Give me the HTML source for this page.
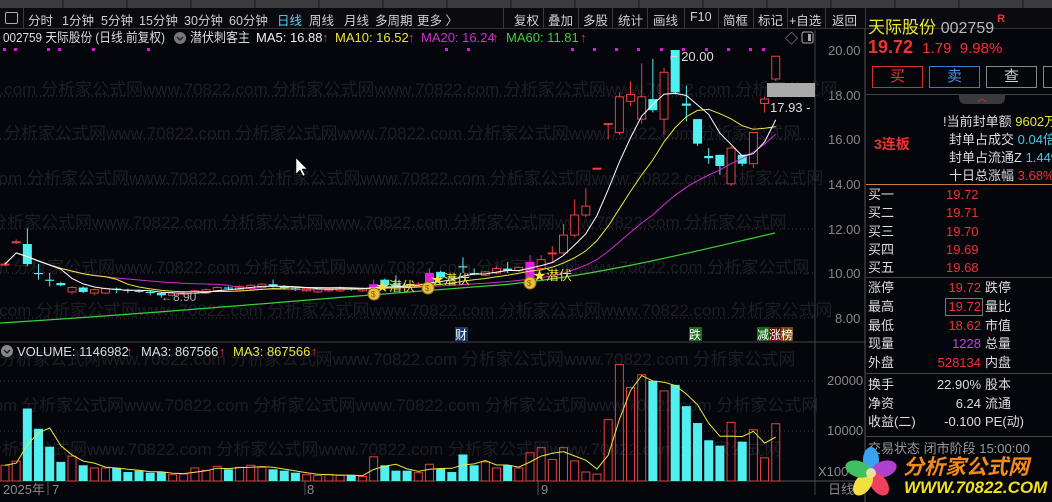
<!DOCTYPE html>
<html><head><meta charset="utf-8">
<style>
*{margin:0;padding:0;box-sizing:border-box}
body{width:1052px;height:502px;overflow:hidden;background:#05050c;font-family:"Liberation Sans","Noto Sans CJK SC",sans-serif;position:relative;color:#ccc}
.a{position:absolute;white-space:nowrap}
#top{left:0;top:0;width:1052px;height:8px;background:#3c3c3e;background-image:repeating-linear-gradient(90deg,transparent 0 62px,#2a2a2c 62px 64px)}
#tb{left:0;top:8px;width:1052px;height:21px;background:#0a0a10;border-bottom:1px solid #333}
#tb span{position:absolute;top:2px;font-size:12.5px;color:#d0d0d0}
.sep{position:absolute;top:0;width:1px;height:21px;background:#3a3a3a}
.rp{font-size:13px}
.btn{position:absolute;top:66px;height:22px;width:51px;border:1px solid;text-align:center;font-size:15px;line-height:20px}
</style></head><body>
<div id="top" class="a"></div>
<div id="tb" class="a">
<div style="position:absolute;left:5px;top:4px;width:13px;height:12px;border:1px solid #aaa;border-radius:2px"></div>
<div class="sep" style="left:23px"></div>
<span style="left:28px">分时</span><span style="left:62px">1分钟</span><span style="left:101px">5分钟</span><span style="left:139px">15分钟</span><span style="left:184px">30分钟</span><span style="left:229px">60分钟</span><span style="left:277px;color:#4fd9ee">日线</span><span style="left:309px">周线</span><span style="left:344px">月线</span><span style="left:375px">多周期</span><span style="left:417px">更多 〉</span>
<div class="sep" style="left:503px"></div>
<span style="left:514px">复权</span><div class="sep" style="left:543px"></div>
<span style="left:548px">叠加</span><div class="sep" style="left:578px"></div>
<span style="left:583px">多股</span><div class="sep" style="left:612px"></div>
<span style="left:618px">统计</span><div class="sep" style="left:647px"></div>
<span style="left:653px">画线</span><div class="sep" style="left:684px"></div>
<span style="left:690px">F10</span><div class="sep" style="left:718px"></div>
<span style="left:723px">简框</span><div class="sep" style="left:753px"></div>
<span style="left:758px">标记</span><div class="sep" style="left:787px"></div>
<span style="left:789px">+自选</span><div class="sep" style="left:825px"></div>
<span style="left:832px">返回</span><div class="sep" style="left:865px"></div>
</div>

<svg class="a" style="left:0;top:0" width="866" height="502" id="ch">
<g stroke="#3a3a44" stroke-dasharray="1 3">
<line x1="0" y1="96" x2="815" y2="96"/><line x1="0" y1="139" x2="815" y2="139"/><line x1="0" y1="184" x2="815" y2="184"/><line x1="0" y1="229" x2="815" y2="229"/><line x1="0" y1="273" x2="815" y2="273"/><line x1="0" y1="318" x2="815" y2="318"/><line x1="0" y1="381" x2="815" y2="381"/><line x1="0" y1="431" x2="815" y2="431"/>
</g>
<line x1="815" y1="30" x2="815" y2="495" stroke="#444"/>
<line x1="0" y1="342" x2="866" y2="342" stroke="#444"/>
<line x1="0" y1="481" x2="866" y2="481" stroke="#555"/>
<line x1="865" y1="29" x2="865" y2="502" stroke="#555"/>
<g fill="#888" font-size="13" font-family="Liberation Sans">
<text x="828" y="55">20.00</text><text x="828" y="100">18.00</text><text x="828" y="144">16.00</text><text x="828" y="189">14.00</text><text x="828" y="234">12.00</text><text x="828" y="278">10.00</text><text x="835" y="323">8.00</text>
<text x="827" y="385">20000</text><text x="827" y="435">10000</text><text x="818" y="476">X100</text>
<text x="828" y="494">日线</text>
<text x="3" y="494">2025年</text><text x="52" y="494">7</text><text x="307" y="494">8</text><text x="541" y="494">9</text>
</g>
<g stroke="#555"><line x1="48" y1="481" x2="48" y2="495"/><line x1="305" y1="481" x2="305" y2="495"/><line x1="538" y1="481" x2="538" y2="495"/></g>
<g id="wm" font-size="17" fill="#1e1e26" font-family="Liberation Sans,Noto Sans CJK SC"></g>
<g id="cd"></g>
<path d="M0 323 C150 314 300 300 500 285 C600 276 700 250 775 233" stroke="#3ad23a" stroke-width="1.2" fill="none"/>
<g fill="#d020d0"><rect x="3" y="48" width="3" height="3"/><rect x="14" y="48" width="3" height="3"/><rect x="47" y="48" width="3" height="3"/><rect x="58" y="48" width="3" height="3"/><rect x="92" y="48" width="3" height="3"/><rect x="147" y="48" width="3" height="3"/>
<rect x="445" y="48" width="3" height="3"/><rect x="467" y="48" width="3" height="3"/><rect x="571" y="48" width="3" height="3"/><rect x="593" y="48" width="3" height="3"/><rect x="615" y="48" width="3" height="3"/><rect x="637" y="48" width="3" height="3"/><rect x="660" y="48" width="3" height="3"/><rect x="682" y="48" width="3" height="3"/><rect x="705" y="48" width="3" height="3"/><rect x="727" y="48" width="3" height="3"/><rect x="749" y="48" width="3" height="3"/><rect x="762" y="48" width="3" height="3"/></g>
<text x="3" y="42" font-size="13" fill="#ddd" textLength="162" lengthAdjust="spacingAndGlyphs">002759 天际股份 (日线.前复权)</text>
<circle cx="180" cy="38" r="6" fill="#777"/><path d="M177 37 l3 3 l3 -3" stroke="#222" stroke-width="1.5" fill="none"/>
<text x="190" y="42" font-size="13" fill="#ddd" textLength="60" lengthAdjust="spacingAndGlyphs">潜伏刺客主</text>
<text x="256" y="42" font-size="13" fill="#eee">MA5: 16.88</text><text x="322" y="42" font-size="13" fill="#e33">↑</text>
<text x="335" y="42" font-size="13" fill="#e8e830">MA10: 16.52</text><text x="408" y="42" font-size="13" fill="#e33">↑</text>
<text x="421" y="42" font-size="13" fill="#d030d0">MA20: 16.24</text><text x="492" y="42" font-size="13" fill="#e33">↑</text>
<text x="506" y="42" font-size="13" fill="#3ad23a">MA60: 11.81</text><text x="580" y="42" font-size="13" fill="#e33">↑</text>
<text x="785" y="43" font-size="13" fill="#aaa">◇</text><rect x="802" y="32" width="11" height="11" rx="2" fill="none" stroke="#aaa"/><rect x="808" y="34" width="3" height="7" fill="#aaa"/>
<text x="670" y="61" font-size="13" fill="#ddd">⌐ 20.00</text>
<rect x="767" y="83" width="48" height="14" fill="#aaa"/>
<text x="770" y="112" font-size="13" fill="#ddd">17.93 -</text>
<text x="161" y="301" font-size="12" fill="#aaa">←8.90</text>
<rect x="455" y="327" width="13" height="14" fill="#123a6a"/><text x="455" y="339" font-size="12" fill="#fff">财</text>
<rect x="689" y="327" width="13" height="14" fill="#186a18"/><text x="689" y="339" font-size="12" fill="#fff">跌</text>
<rect x="757" y="327" width="12" height="14" fill="#186a18"/><rect x="769" y="327" width="12" height="14" fill="#6a1010"/><rect x="781" y="327" width="12" height="14" fill="#7a4a10"/><text x="757" y="339" font-size="12" fill="#fff">减涨榜</text>
<g font-size="13" fill="#f0e040"><text x="376" y="291">★潜伏</text><text x="431" y="284">★潜伏</text><text x="533" y="280">★潜伏</text></g>
<g fill="#e8c040" stroke="#a07010"><circle cx="374" cy="294" r="6"/><circle cx="428" cy="288" r="6"/><circle cx="530" cy="283" r="6"/></g>
<g font-size="8" fill="#8a5a00"><text x="371" y="297">$</text><text x="425" y="291">$</text><text x="527" y="286">$</text></g>
<circle cx="7" cy="351" r="6" fill="#888"/><path d="M4 350 l3 3 l3 -3" stroke="#222" stroke-width="1.5" fill="none"/>
<text x="17" y="356" font-size="13" fill="#ddd">VOLUME: 1146982</text><text x="126" y="356" font-size="13" fill="#e33">↑</text>
<text x="141" y="356" font-size="13" fill="#ddd">MA3: 867566</text><text x="219" y="356" font-size="13" fill="#e33">↑</text>
<text x="233" y="356" font-size="13" fill="#e8e830">MA3: 867566</text><text x="311" y="356" font-size="13" fill="#e33">↑</text>
<path d="M296 158 l0 16 l4 -4 l3 6 l2 -1 l-3 -6 l5 0 z" fill="#fff" stroke="#000" stroke-width=".5"/>
</svg>

<div class="a" style="left:868px;top:13px;font-size:17px;color:#e8e830">天际股份 <span style="color:#bbb;font-size:16px">002759</span><span style="color:#e33;font-size:11px;font-weight:bold;vertical-align:top"> R</span></div>
<div class="a" style="left:868px;top:37px;font-size:18px;color:#ee3333"><b>19.72</b> <span style="font-size:15px">&nbsp;1.79 &nbsp;9.98%</span></div>
<div class="btn" style="left:872px;border-color:#d03030;color:#e33">买</div>
<div class="btn" style="left:929px;border-color:#3a7ad0;color:#4a90e0">卖</div>
<div class="btn" style="left:986px;border-color:#888;color:#ccc">查</div>
<div class="btn" style="left:1043px;border-color:#888;width:20px"></div>
<div class="a" style="left:866px;top:94px;width:186px;border-top:1px solid #444"></div>
<div class="a" style="left:959px;top:94px;width:46px;height:10px;background:#3a3a3e;border-radius:0 0 6px 6px;color:#e33;font-size:9px;text-align:center;line-height:9px">︿</div>
<div class="a rp" style="left:943px;top:111px;color:#ddd">ǃ当前封单额 <span style="color:#e8e830">9602万</span></div>
<div class="a rp" style="left:949px;top:129px;color:#ddd">封单占成交 <span style="color:#3ad0e0">0.04倍</span></div>
<div class="a rp" style="left:949px;top:147px;color:#ddd">封单占流通Z <span style="color:#3ad0e0">1.44%</span></div>
<div class="a rp" style="left:949px;top:165px;color:#ddd">十日总涨幅 <span style="color:#e33">3.68%</span></div>
<div class="a" style="left:874px;top:134px;font-size:14px;font-weight:bold;color:#ee3333">3连板</div>
<div class="a" style="left:866px;top:184px;width:186px;border-top:1px solid #c08040"></div>
<div class="a rp" style="left:868px;top:186px;line-height:18.3px;color:#ddd">买一<br>买二<br>买三<br>买四<br>买五</div>
<div class="a rp" style="left:946px;top:186px;line-height:18.3px;color:#ee3333">19.72<br>19.71<br>19.70<br>19.69<br>19.68</div>
<div class="a" style="left:866px;top:277px;width:186px;border-top:1px solid #444"></div>
<div class="a rp" style="left:868px;top:279px;line-height:18.8px;color:#ddd">涨停<br>最高<br>最低<br>现量<br>外盘</div>
<div class="a rp" style="left:908px;top:279px;width:73px;text-align:right;line-height:18.8px;color:#ee3333">19.72<br>19.72<br>18.62<br><span style="color:#c040e0">1228</span><br>528134</div>
<div class="a" style="left:945px;top:298px;width:38px;height:18px;border:1px solid #777"></div>
<div class="a rp" style="left:985px;top:279px;line-height:18.8px;color:#ddd">跌停<br>量比<br>市值<br>总量<br>内盘</div>
<div class="a" style="left:866px;top:373px;width:186px;border-top:1px solid #444"></div>
<div class="a rp" style="left:868px;top:376px;line-height:18.5px;color:#ddd">换手<br>净资<br>收益(二)</div>
<div class="a rp" style="left:908px;top:376px;width:73px;text-align:right;line-height:18.5px;color:#ddd">22.90%<br>6.24<br>-0.100</div>
<div class="a rp" style="left:985px;top:376px;line-height:18.5px;color:#ddd">股本<br>流通<br>PE(动)</div>
<div class="a" style="left:866px;top:436px;width:186px;border-top:1px solid #444"></div>
<div class="a rp" style="left:868px;top:438px;color:#999">交易状态 闭市阶段 15:00:00</div>
<svg class="a" style="left:843px;top:445px" width="60" height="56">
<g transform="translate(28,28)">
<ellipse cx="0" cy="-13" rx="8" ry="13" fill="#3aa0f0"/>
<ellipse cx="13" cy="-4" rx="8" ry="13" fill="#b040d0" transform="rotate(72 13 -4)"/>
<ellipse cx="8" cy="11" rx="8" ry="13" fill="#f04060" transform="rotate(144 8 11)"/>
<ellipse cx="-8" cy="11" rx="8" ry="13" fill="#f0e040" transform="rotate(216 -8 11)"/>
<ellipse cx="-13" cy="-4" rx="8" ry="13" fill="#40c060" transform="rotate(288 -13 -4)"/>
<circle r="5" fill="#e8e0a0"/></g></svg>
<div class="a" style="left:903px;top:451px;font-size:21px;font-weight:bold;font-style:italic;color:#f08a20;text-shadow:1px 1px 0 #000">分析家公式网</div>
<div class="a" style="left:904px;top:478px;font-size:17px;font-weight:bold;font-style:italic;color:#f0e020;font-family:'Liberation Sans',sans-serif">WWW.70822.COM</div>

<script>
var NS="http://www.w3.org/2000/svg";
function el(p,t,a){var e=document.createElementNS(NS,t);for(var k in a)e.setAttribute(k,a[k]);p.appendChild(e);return e;}
var wm=document.getElementById('wm');
var ys=[89,133,178,222,267,310,359,405,449];
ys.forEach(function(y,i){var t=el(wm,'text',{x:-((i*37)%60)-10,y:y+6});t.textContent="2.com 分析家公式网www.70822.com 分析家公式网www.70822.com 分析家公式网www.70822.com 分析家公式网";});
var D=[[10.4,10.4,10.5,10.3],[11.4,11.4,11.5,11.3],[11.3,10.4,12.0,10.3],[10.0,9.95,10.4,9.7],[9.7,9.65,10.0,9.4],[9.55,9.45,9.6,9.4],[9.15,9.35,9.4,9.05],[9.35,9.15,9.4,9.1],[9.1,9.25,9.3,9.0],[9.1,9.3,9.35,9.05],
[9.3,9.25,9.35,9.1],[9.25,9.2,9.3,9.1],[9.2,9.15,9.25,9.1],[9.15,9.1,9.2,9.0],[9.1,9.0,9.15,8.9],[9.0,9.1,9.15,8.95],[9.05,9.1,9.2,9.0],[9.1,9.2,9.25,9.05],[9.1,9.25,9.3,9.05],[9.2,9.35,9.4,9.15],
[9.35,9.3,9.4,9.25],[9.25,9.4,9.45,9.2],[9.3,9.45,9.5,9.25],[9.35,9.5,9.55,9.3],[9.5,9.4,9.7,9.35],[9.4,9.3,9.45,9.25],[9.3,9.25,9.35,9.2],[9.2,9.3,9.35,9.15],[9.15,9.25,9.3,9.1],[9.2,9.3,9.35,9.15],
[9.2,9.35,9.4,9.15],[9.3,9.25,9.35,9.2],[9.2,9.3,9.35,9.15],[9.2,9.5,9.7,9.15,1],[9.7,9.45,9.75,9.4],[9.5,9.4,9.9,9.35],[9.45,9.4,9.5,9.35],[9.4,9.5,9.6,9.35],[9.5,10.0,10.2,9.45,1],[10.05,9.8,10.1,9.75],
[9.8,9.75,9.9,9.7],[10.3,10.25,10.7,10.0],[10.0,9.95,10.2,9.9],[9.9,10.05,10.1,9.85],[10.0,10.2,10.3,9.95],[10.2,10.1,10.5,10.0],[10.1,10.25,10.3,10.05],[9.6,10.5,10.8,9.5,1],[10.2,10.6,10.8,10.1],[10.9,10.9,11.2,10.5],
[10.9,11.7,12.2,10.8],[11.7,12.6,13.3,11.6],[12.6,13.0,13.8,12.5],[14.7,14.7,14.7,14.7],[16.7,16.7,16.7,16.0],[16.3,17.9,18.1,16.2],[17.7,18.0,18.6,17.5],[16.9,17.9,19.4,16.7],[17.8,17.3,19.6,17.2],[16.9,19.0,19.2,16.2],
[20.0,18.1,20.0,18.0],[17.6,17.5,18.4,16.8],[16.9,15.8,16.9,15.7],[15.25,15.15,15.6,14.9],[15.3,14.8,15.3,14.4],[14.0,15.6,15.7,13.9],[15.3,14.9,15.3,14.8],[14.9,16.3,16.3,14.7],[17.6,17.8,17.9,17.2],[18.7,19.72,19.72,18.6]];
var V=[430,418,262,322,375,420,403,430,438,438,438,450,446,452,450,458,456,438,445,433,442,436,430,436,442,446,452,458,460,457,460,460,463,405,430,446,446,452,427,440,450,398,430,420,438,430,438,393,378,413,378,417,450,456,295,132,200,162,180,210,192,255,305,356,372,303,360,325,408,307];
var cd=document.getElementById('cd');
function Y(p){return 50+(20-p)*22.3;}
function X(i){return 5+i*11.17;}
var RED="#e84040",CY="#50f0f0",MG="#e020e0";
D.forEach(function(d,i){
 var x=X(i),o=d[0],c=d[1],up=c>=o,col=d[4]?MG:(up?RED:CY);
 var t=Y(Math.max(o,c)),b=Y(Math.min(o,c));
 el(cd,'line',{x1:x,y1:Y(d[2]),x2:x,y2:Y(d[3]),stroke:col});
 var h=Math.max(b-t,1);
 if(up&&!d[4])el(cd,'rect',{x:x-4,y:t,width:8,height:h,fill:'#05050c',stroke:col});
 else el(cd,'rect',{x:x-4.5,y:t,width:9,height:h,fill:col});
 var vc=up?RED:CY, vy=320+V[i]/2.96;
 if(up)el(cd,'rect',{x:x-4,y:vy,width:8,height:481-vy,fill:'none',stroke:vc});
 else el(cd,'rect',{x:x-4.5,y:vy,width:9,height:481-vy,fill:vc});
});
function ma(n,col){var pts=[];for(var i=0;i<D.length;i++){var s=0,k=0;for(var j=Math.max(0,i-n+1);j<=i;j++){s+=D[j][1];k++;}pts.push(X(i).toFixed(1)+","+Y(s/k).toFixed(1));}
 el(cd,'polyline',{points:pts.join(" "),fill:'none',stroke:col,'stroke-width':1});}
ma(20,'#d030d0');ma(10,'#e8e840');ma(5,'#ffffff');
var vp=[];for(var i=0;i<V.length;i++){var s=0,k=0;for(var j=Math.max(0,i-2);j<=i;j++){s+=V[j];k++;}vp.push(X(i).toFixed(1)+","+(320+s/k/2.96).toFixed(1));}
el(cd,'polyline',{points:vp.join(" "),fill:'none',stroke:'#e8e840','stroke-width':1});
</script>
</body></html>
